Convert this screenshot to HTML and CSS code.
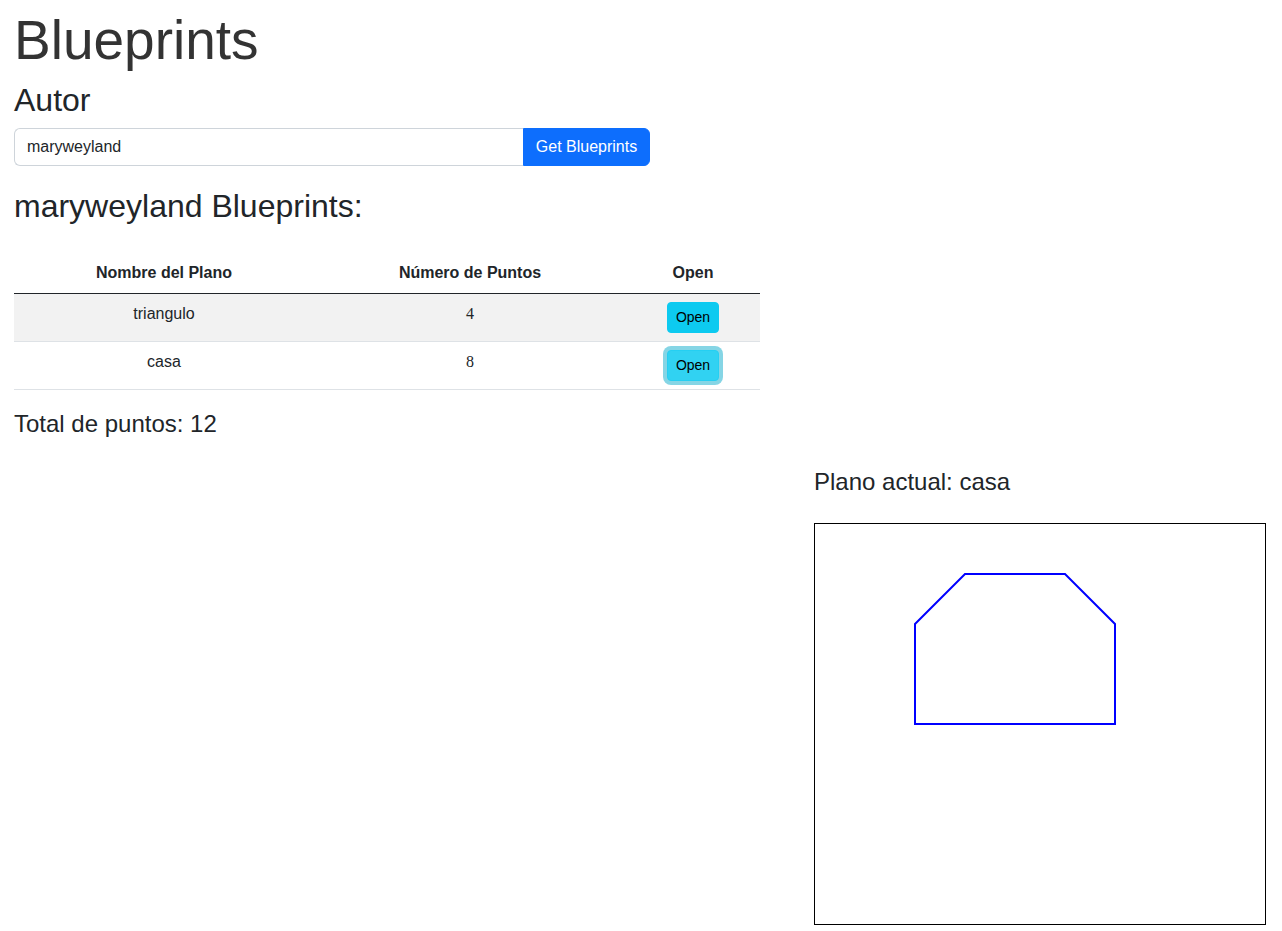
FILE: index.html
```html
<!DOCTYPE html>
<html lang="es">
<head>
<meta charset="utf-8">
<title>Blueprints</title>
<link rel="stylesheet" href="styles.css">
</head>
<body>
<div class="page">
  <h1 class="title">Blueprints</h1>
  <h2 class="label">Autor</h2>
  <div class="input-group">
    <input class="author-input" type="text" value="maryweyland">
    <button class="btn-primary" type="button">Get Blueprints</button>
  </div>
  <h2 class="list-title">maryweyland Blueprints:</h2>
  <table class="bp-table">
    <thead>
      <tr>
        <th class="c1">Nombre del Plano</th>
        <th class="c2">Número de Puntos</th>
        <th class="c3">Open</th>
      </tr>
    </thead>
    <tbody>
      <tr class="striped">
        <td>triangulo</td>
        <td class="num">4</td>
        <td><button class="btn-info" type="button">Open</button></td>
      </tr>
      <tr>
        <td>casa</td>
        <td class="num">8</td>
        <td><button class="btn-info focused" type="button">Open</button></td>
      </tr>
    </tbody>
  </table>
  <h4 class="total">Total de puntos: 12</h4>
  <section class="viewer">
    <h4 class="current">Plano actual: casa</h4>
    <svg class="canvas" width="450" height="400" viewBox="0 0 450 400">
      <polygon points="100,100 150,50 250,50 300,100 300,200 100,200" fill="none" stroke="#0000ff" stroke-width="2"/>
    </svg>
  </section>
</div>
</body>
</html>
```

FILE: styles.css
```css
* { box-sizing: border-box; }
html, body { margin: 0; padding: 0; background: #fff; }
body {
  font-family: "Liberation Sans", Arial, sans-serif;
  color: #212529;
  font-size: 16px;
  line-height: 1.5;
}
.page { padding: 7px 14px 0 14px; }
.title {
  margin: 0;
  font-size: 55px;
  line-height: 66px;
  font-weight: 400;
  color: #333333;
}
.label {
  margin: 8px 0 9px 0;
  font-size: 32px;
  line-height: 38px;
  font-weight: 400;
}
.input-group {
  display: flex;
  width: 636px;
  height: 38px;
}
.author-input {
  flex: 1;
  min-width: 0;
  height: 38px;
  border: 1px solid #ced4da;
  border-right: none;
  border-radius: 6px 0 0 6px;
  padding: 6px 12px;
  font-family: "Liberation Sans", Arial, sans-serif;
  font-size: 16px;
  color: #212529;
  outline: none;
}
.btn-primary {
  flex: none;
  width: 127px;
  height: 38px;
  border: 1px solid #0d6efd;
  background: #0d6efd;
  color: #fff;
  border-radius: 0 6px 6px 0;
  font-family: "Liberation Sans", Arial, sans-serif;
  font-size: 16px;
  line-height: 24px;
  padding: 6px 0;
  white-space: nowrap;
  text-align: center;
}
.list-title {
  margin: 21px 0 28px 0;
  font-size: 32px;
  line-height: 38px;
  font-weight: 400;
}
.bp-table {
  width: 746px;
  border-collapse: collapse;
  vertical-align: top;
}
.bp-table th, .bp-table td {
  padding: 8px;
  text-align: center;
  line-height: 24px;
  vertical-align: top;
}
.bp-table th {
  font-weight: 700;
  border-bottom: 1px solid #212529;
}
.c1 { width: 300px; }
.c2 { width: 312px; }
.c3 { width: 134px; }
.bp-table td { border-bottom: 1px solid #dee2e6; }
.striped td { background: #f2f2f2; }
.num { font-family: "Liberation Serif", "Times New Roman", serif; }
.btn-info {
  display: inline-block;
  height: 31px;
  width: 52px;
  padding: 4px 0;
  font-family: "Liberation Sans", Arial, sans-serif;
  font-size: 14px;
  line-height: 21px;
  color: #000;
  background: #0dcaf0;
  border: 1px solid #0dcaf0;
  border-radius: 4px;
  vertical-align: top;
}
.btn-info.focused {
  background: #31d2f2;
  border-color: #25cff2;
  box-shadow: 0 0 0 4px rgba(11, 172, 204, 0.5);
}
.total {
  margin: 19px 0 0 0;
  font-size: 24px;
  line-height: 29px;
  font-weight: 400;
}
.viewer { margin: 29px 0 0 800px; }
.current {
  margin: 0 0 27px 0;
  font-size: 24px;
  line-height: 29px;
  font-weight: 400;
}
.canvas {
  display: block;
  width: 452px;
  height: 402px;
  border: 1px solid #000;
}
```
